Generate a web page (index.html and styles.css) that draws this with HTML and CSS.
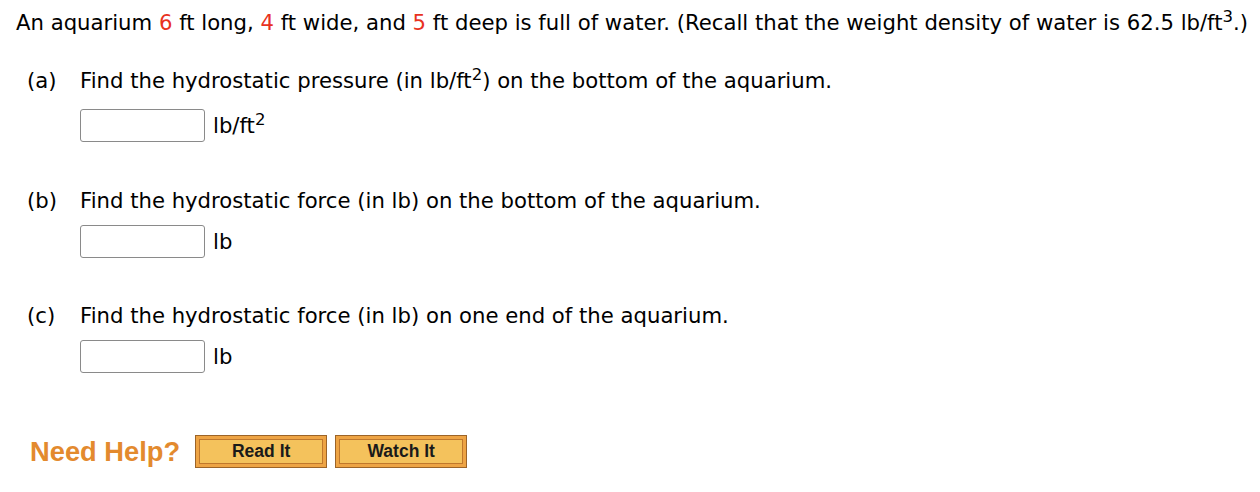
FILE: index.html
```html
<!DOCTYPE html>
<html>
<head>
<meta charset="utf-8">
<link rel="stylesheet" href="styles.css">
</head>
<body>
<div class="page">
  <p class="intro">An aquarium <span class="red">6</span> ft long, <span class="red">4</span> ft wide, and <span class="red">5</span> ft deep is full of water. (Recall that the weight density of water is 62.5 lb/ft<sup>3</sup>.)</p>

  <div class="part first">
    <div class="q"><span class="lbl">(a)</span><span>Find the hydrostatic pressure (in lb/ft<sup>2</sup>) on the bottom of the aquarium.</span></div>
    <div class="ans"><span class="box"></span><span class="unit">lb/ft<sup>2</sup></span></div>
  </div>

  <div class="part">
    <div class="q"><span class="lbl">(b)</span><span>Find the hydrostatic force (in lb) on the bottom of the aquarium.</span></div>
    <div class="ans"><span class="box"></span><span class="unit">lb</span></div>
  </div>

  <div class="part">
    <div class="q"><span class="lbl">(c)</span><span>Find the hydrostatic force (in lb) on one end of the aquarium.</span></div>
    <div class="ans"><span class="box"></span><span class="unit">lb</span></div>
  </div>

  <div class="help">
    <span class="need">Need Help?</span>
    <span class="btn"><span class="btn-in">Read It</span></span>
    <span class="btn"><span class="btn-in">Watch It</span></span>
  </div>
</div>
</body>
</html>
```

FILE: styles.css
```css
html, body {
  margin: 0;
  padding: 0;
  background: #fff;
}
.page {
  font-family: "DejaVu Sans", Verdana, sans-serif;
  font-size: 21.2px;
  color: #000;
  padding: 8px 0 0 16px;
}
.intro {
  margin: 0;
  line-height: 30px;
  white-space: nowrap;
}
.red { color: #e8321e; }
sup {
  font-size: 0.78em;
  line-height: 0;
  vertical-align: 0.5em;
}
.part {
  display: flex;
  flex-direction: column;
  margin-top: 43px;
}
.part.first { margin-top: 28px; }
.part.first + .part { margin-top: 44px; }
.q {
  display: flex;
  line-height: 30px;
  padding-left: 11px;
}
.lbl {
  width: 53px;
  flex: none;
}
.ans {
  display: flex;
  align-items: center;
  margin-top: 9px;
  padding-left: 64px;
}
.part.first .ans { margin-top: 13px; }
.box {
  width: 123px;
  height: 31px;
  border: 1px solid #8a8a8a;
  border-radius: 3px;
  background: #fff;
}
.unit {
  margin-left: 8px;
  line-height: 30px;
}
.help {
  display: flex;
  align-items: center;
  margin-top: 62px;
  padding-left: 14px;
}
.need {
  font-family: "Liberation Sans", Arial, sans-serif;
  font-weight: bold;
  font-size: 27.3px;
  color: #e38a2e;
  margin-right: 15px;
}
.btn {
  display: inline-block;
  border: 1px solid #9c6428;
  background: #eea445;
  padding: 3px;
  margin-right: 8px;
}
.btn-in {
  display: block;
  width: 122px;
  height: 23px;
  border: 1px solid #c0782c;
  background: #f4c25c;
  font-family: "Liberation Sans", Arial, sans-serif;
  font-weight: bold;
  font-size: 17.5px;
  line-height: 23px;
  text-align: center;
  color: #1a1a1a;
}
```
